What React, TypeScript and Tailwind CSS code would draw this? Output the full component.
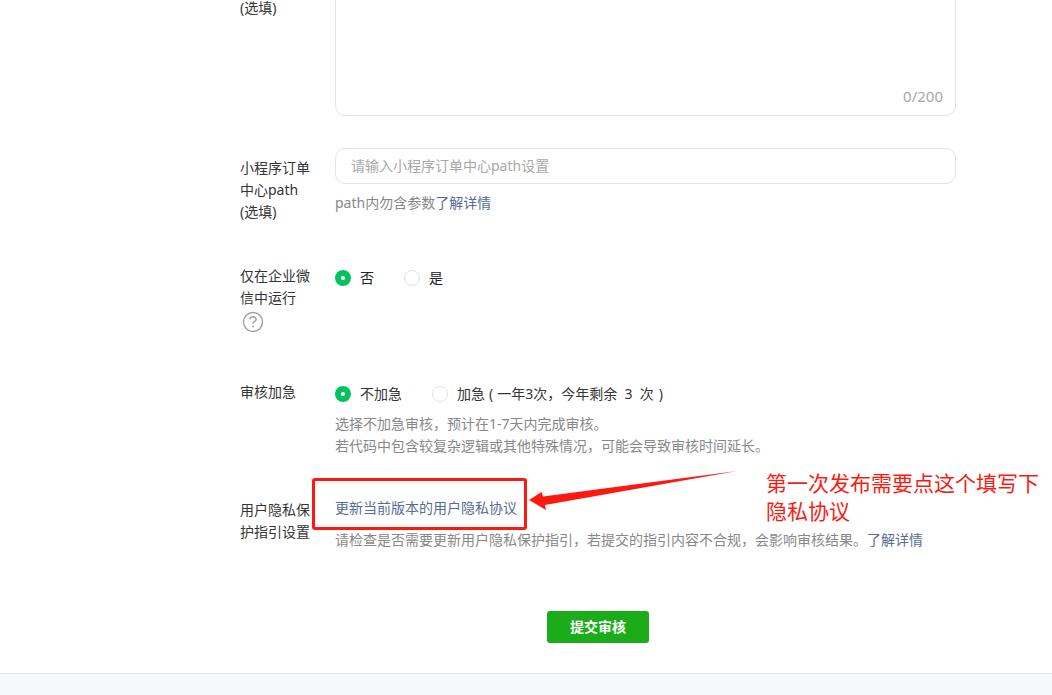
export default function App() {
  return (
    <div className="relative h-[695px] w-full overflow-hidden bg-[#f6f8f9] text-[14px] leading-[22px] text-[#353535] font-['Noto_Sans','Noto_Sans_CJK_SC',sans-serif]">
      <main className="flex h-[674px] flex-col border-b border-[#e4e6e9] bg-white pl-[240px]">
        {/* description row, scrolled partly out of view */}
        <section className="-mt-[84px] flex shrink-0">
          <div className="w-[95px] shrink-0 pt-[81px]">(选填)</div>
          <div className="relative h-[200px] w-[621px] rounded-[10px] border border-[#e3e3e3]">
            <span className="absolute bottom-[8px] right-[12px] text-[15px] text-[#a8a8a8]">0/200</span>
          </div>
        </section>

        <section className="mt-[32px] flex shrink-0">
          <div className="w-[72px] shrink-0 pt-[9px]">小程序订单中心path<br />(选填)</div>
          <div className="ml-[23px] w-[621px]">
            <div className="flex h-[36px] items-center rounded-[10px] border border-[#e3e3e3] pl-[15px] text-[#a8a8a8]">请输入小程序订单中心path设置</div>
            <p className="mt-[8px] text-[#888888]">path内勿含参数<a className="text-[#576b95]">了解详情</a></p>
          </div>
        </section>

        <section className="mt-[42px] flex shrink-0">
          <div className="w-[72px] shrink-0">
            仅在企业微信中运行
            <svg className="mt-[2px] ml-[2px] block" width="22" height="22" viewBox="0 0 22 22" fill="none">
              <circle cx="11" cy="11" r="9.5" stroke="#a0a0a0" strokeWidth="1.4" />
              <path d="M8 8.6c0-1.7 1.3-2.8 3-2.8s3 1 3 2.6c0 2.2-3 2.3-3 4.4" stroke="#a0a0a0" strokeWidth="1.4" />
              <circle cx="11" cy="15.6" r="1" fill="#a0a0a0" />
            </svg>
          </div>
          <div className="ml-[23px] flex h-[22px] translate-y-[2px] items-center">
            <Radio checked />
            <span className="ml-[9px] text-[#222222]">否</span>
            <span className="ml-[30px]"><Radio /></span>
            <span className="ml-[9px] text-[#222222]">是</span>
          </div>
        </section>

        <section className="mt-[48px] flex shrink-0">
          <div className="w-[72px] shrink-0">审核加急</div>
          <div className="ml-[23px]">
            <div className="flex h-[22px] translate-y-[2px] items-center">
              <Radio checked />
              <span className="ml-[9px]">不加急</span>
              <span className="ml-[30px]"><Radio /></span>
              <span className="ml-[9px]">加急<span className="ml-[4px] mr-[4px]">(</span>一年3次，今年剩余 &nbsp;3 &nbsp;次<span className="ml-[5px]">)</span></span>
            </div>
            <p className="mt-[10px] text-[#888888]">选择不加急审核，预计在1-7天内完成审核。</p>
            <p className="text-[#888888]">若代码中包含较复杂逻辑或其他特殊情况，可能会导致审核时间延长。</p>
          </div>
        </section>

        <section className="mt-[42px] flex shrink-0">
          <div className="w-[72px] shrink-0">用户隐私保护指引设置</div>
          <div className="ml-[23px]">
            <a className="-mt-[2px] block text-[#576b95]">更新当前版本的用户隐私协议</a>
            <p className="mt-[10px] text-[#888888]">请检查是否需要更新用户隐私保护指引，若提交的指引内容不合规，会影响审核结果。<a className="text-[#576b95]">了解详情</a></p>
          </div>
        </section>

        <div className="mt-[60px] ml-[307px] flex h-[32px] w-[102px] shrink-0 items-center justify-center rounded-[3px] bg-[#1aad19] font-bold text-white">提交审核</div>
      </main>

      {/* screenshot annotations */}
      <div className="absolute left-[312px] top-[478px] h-[52px] w-[215px] rounded-[3px] border-[3px] border-[#fb1a10]" />
      <svg className="absolute left-[520px] top-[465px]" width="225" height="50" viewBox="520 465 225 50">
        <polygon points="737,471 543,496.5 541.5,492 529,500 546,510 545,505" fill="#fb1a10" />
      </svg>
      <div className="absolute left-[766px] top-[469px] w-[280px] text-[21px] leading-[28px] text-[#fb1a10]">第一次发布需要点这个填写下<br />隐私协议</div>
    </div>
  );
}

function Radio({ checked = false }: { checked?: boolean }) {
  return checked ? (
    <span className="flex h-[16px] w-[16px] items-center justify-center rounded-full bg-[#07c160]">
      <span className="h-[4px] w-[4px] rounded-full bg-white" />
    </span>
  ) : (
    <span className="block h-[16px] w-[16px] rounded-full border border-[#e3e3e3]" />
  );
}
